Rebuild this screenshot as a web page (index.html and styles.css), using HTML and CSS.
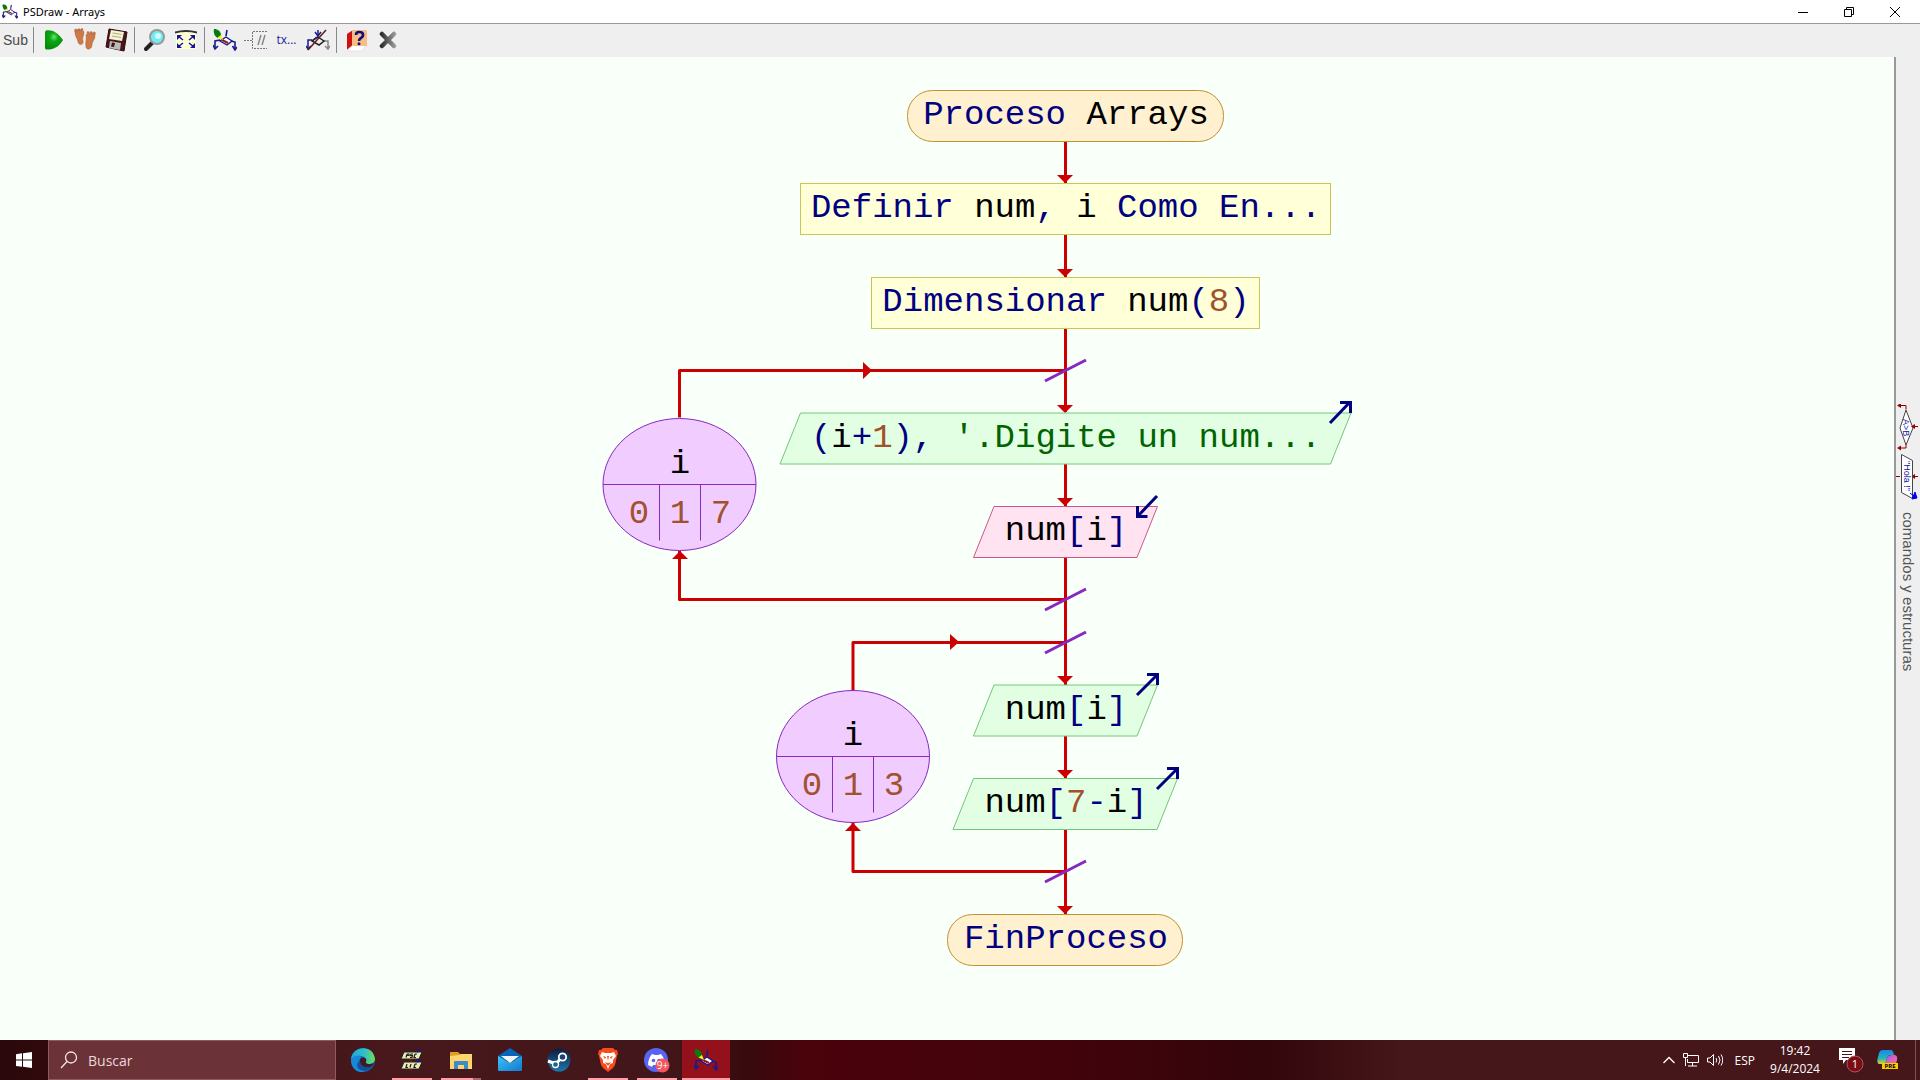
FILE: index.html
```html
<!DOCTYPE html>
<html lang="es">
<head>
<meta charset="utf-8">
<title>PSDraw - Arrays</title>
<link rel="stylesheet" href="styles.css">
</head>
<body>
<svg class="defs" aria-hidden="true">
  <defs>
    <symbol id="draw" viewBox="0 0 24 22">
      <path d="M13 8l6 4-5 4-7-4z" fill="#fff" stroke="#1a1a8c" stroke-width="1.4"/>
      <path d="M14 1l-1 6M7 11l-5 1v7M18 12l4 1v7" fill="none" stroke="#1a1a8c" stroke-width="1.6"/>
      <path d="M0 16l2 4 3-3M19.500 17l2.500 4 2-3" fill="none" stroke="#1a1a8c" stroke-width="1.6"/>
      <path d="M9 11l6 3" stroke="#901820" stroke-width="2"/>
      <path d="M1 0c4 0 7 2 7 7l-3 2C2 8 0 4 1 0z" fill="#087a10"/>
      <path d="M4.500 8.500L8 6l2 5z" fill="#f3f018"/>
    </symbol>
    <linearGradient id="edgeA" x1="0" y1="0" x2="1" y2="0"><stop offset="0" stop-color="#1ba5dc"/><stop offset=".6" stop-color="#35c1c4"/><stop offset="1" stop-color="#6be04f"/></linearGradient>
    <linearGradient id="mailA" x1="0" y1="0" x2="1" y2="1"><stop offset="0" stop-color="#39c4f5"/><stop offset="1" stop-color="#1378d0"/></linearGradient>
    <linearGradient id="steamA" x1="0" y1="0" x2="0" y2="1"><stop offset="0" stop-color="#101a3c"/><stop offset="1" stop-color="#1a78ae"/></linearGradient>
    <linearGradient id="cop" x1="0" y1="0" x2="1" y2="1"><stop offset="0" stop-color="#7a5cf0"/><stop offset=".5" stop-color="#d864c8"/><stop offset="1" stop-color="#f8785c"/></linearGradient>
    <linearGradient id="cop2" x1="0" y1="0" x2="0" y2="1"><stop offset="0" stop-color="#1c86f0"/><stop offset=".6" stop-color="#22b9b4"/><stop offset="1" stop-color="#e0d030"/></linearGradient>
    <linearGradient id="xg" gradientUnits="userSpaceOnUse" x1="1" y1="0" x2="18" y2="0"><stop offset="0" stop-color="#222"/><stop offset="1" stop-color="#aaa"/></linearGradient>
    <radialGradient id="playg" cx=".5" cy=".35" r=".6"><stop offset="0" stop-color="#70e070"/><stop offset=".4" stop-color="#08a810"/><stop offset="1" stop-color="#078a0c"/></radialGradient>
  </defs>
</svg>

<header class="titlebar">
  <svg class="app-icon" viewBox="0 0 24 22"><use href="#draw"/></svg>
  <h1 class="title">PSDraw - Arrays</h1>
  <div class="window-buttons">
    <button aria-label="Minimizar"><svg viewBox="0 0 12 12"><path d="M1 6.500h10" stroke="#000"/></svg></button>
    <button aria-label="Restaurar"><svg viewBox="0 0 12 12"><path d="M1.500 3.500h7v7h-7zM3.500 3.500v-2h7v7h-2" fill="none" stroke="#000"/></svg></button>
    <button aria-label="Cerrar"><svg viewBox="0 0 12 12"><path d="M1 1l10 10M11 1L1 11" stroke="#000"/></svg></button>
  </div>
</header>

<nav class="toolbar" aria-label="Herramientas">
  <button class="sub">Sub</button>
  <span class="sep"></span>
  <button aria-label="Ejecutar"><svg width="20" height="20" viewBox="0 0 20 20"><path d="M2 .500c6-1 12 2 17 9.500-4 7-10 10-17 9.500Q.500 19 1 16V3Q1 1 2 .500z" fill="url(#playg)"/></svg></button>
  <button aria-label="Paso a paso"><svg width="22" height="24" viewBox="0 0 22 24"><g fill="#cc7a48" stroke="#a65b30" stroke-width=".5"><path d="M1 4c1-3 8-3 9 0 0 4-2 5-1 9s-4 5-5 1C4 11 1 9 1 4z"/><path d="M12 7c1-3 9-2 9 1 0 4-3 5-3 9s-5 6-6 2 1-8 0-12z"/><circle cx="2" cy="2.500" r="1.500"/><circle cx="5" cy="1.700" r="1"/><circle cx="8" cy="1.500" r="1"/><circle cx="14" cy="4.500" r="1"/><circle cx="17" cy="4.500" r="1"/><circle cx="20" cy="5.500" r="1.500"/></g></svg></button>
  <button aria-label="Guardar"><svg width="24" height="24" viewBox="0 0 24 24"><path d="M5 1l18 3-3 19-18-4z" fill="#4a1519" stroke="#2b090c"/><path d="M7 2l13 2-2 9-13-2z" fill="#f6f4d4"/><path d="M8.500 5l9 1.500M8 8l9 1.500" stroke="#b0ad84"/><path d="M6 13l11 2-1 7-11-2z" fill="#bababa"/><path d="M8 14.500l3 .500-1 4-3-.500z" fill="#3b1418"/></svg></button>
  <span class="sep"></span>
  <button aria-label="Zoom"><svg width="22" height="24" viewBox="0 0 22 24"><path d="M2 21l6-6" stroke="#222" stroke-width="4" stroke-linecap="round"/><circle cx="13" cy="9" r="7" fill="#70ecf4" stroke="#999" stroke-width="2"/><circle cx="14" cy="8" r="3" fill="#cffcff"/></svg></button>
  <button aria-label="Ajustar"><svg width="22" height="20" viewBox="0 0 22 20"><path d="M1 1h20v18H1z" fill="#ffffd4"/><path d="M0 2.500q11-3 22 0" stroke="#333" stroke-width="2" fill="none"/><path d="M2 5h5L2 10zM20 5h-5l5 5zM2 18h5l-5-5zM20 18h-5l5-5z" fill="#1414a0"/><path d="M3 6l5 4M19 6l-5 4M3 17l5-4M19 17l-5-4" stroke="#1414a0" stroke-width="1.500"/></svg></button>
  <span class="sep"></span>
  <button aria-label="Editar"><svg width="24" height="22" viewBox="0 0 24 22"><use href="#draw"/></svg></button>
  <button aria-label="Comentarios"><svg width="24" height="20" viewBox="0 0 24 20"><path d="M0 10.500h8M23 1.500H8.500v17H23" fill="none" stroke="#777" stroke-dasharray="2 1"/><path d="M17 5l-3 10M21 5l-3 10" stroke="#888" stroke-width="1.500"/></svg></button>
  <button class="tx">tx...</button>
  <button aria-label="Estilo"><svg width="24" height="22" viewBox="0 0 24 22"><path d="M12 1v6M11 8l-5 4M6 11H2v8" fill="none" stroke="#1a1a8c" stroke-width="1.500"/><path d="M0 17l2 3 3-3M9 3l3 4 3-4" fill="none" stroke="#1a1a8c" stroke-width="1.500"/><path d="M18 12h4v7M19 17l3 3 2-3" fill="none" stroke="#888" stroke-width="1.500"/><path d="M12 8l6 4-5 4-7-4z" fill="none" stroke="#222" stroke-width="1.500"/><path d="M2 21L20 1" stroke="#641820" stroke-width="1.500"/></svg></button>
  <span class="sep"></span>
  <button aria-label="Ayuda"><svg width="22" height="24" viewBox="0 0 22 24"><path d="M1 6l6-4v15l-4 5-2-1z" fill="#cf1010"/><path d="M2 21l5-4h13l-4 6H3z" fill="#fff" stroke="#ccc" stroke-width=".5"/><path d="M6 2h14q1 0 1 2v14H6z" fill="#f8bd84"/><path d="M10 7q0-3 3-3c5 0 5 4 2 6q-2 1-2 3" fill="none" stroke="#10107c" stroke-width="2.600"/><circle cx="13" cy="15.800" r="1.500" fill="#10107c"/></svg></button>
  <button aria-label="Cerrar diagrama"><svg width="18" height="18" viewBox="0 0 18 18"><path d="M3 3l12 12M15 3L3 15" stroke="url(#xg)" stroke-width="4.500" stroke-linecap="round"/></svg></button>
</nav>

<div class="workspace">
  <main class="canvas">
    <svg class="flowchart" viewBox="522 57 850 943" role="img" aria-label="Diagrama de flujo Arrays">
      <g class="wire">
        <path d="M1065.500 141v42M1065.500 234v43M1065.500 328v84M1065.500 464v42M1065.500 557v128M1065.500 736v42M1065.500 829v85"/>
        <path d="M1065 370.500H679.500v47M1065 599.500H679.500v-50"/>
        <path d="M1065 642.500H853v48M1065 871.500H853v-50"/>
      </g>
      <g class="heads">
        <path d="M1057 175h16l-8 8zM1057 269h16l-8 8zM1057 405h16l-8 8zM1057 498h16l-8 8zM1057 676h16l-8 8zM1057 770h16l-8 8zM1057 906h16l-8 8z"/>
        <path d="M863 362v17l9-8.500zM950 634v16l9-8z"/>
        <path d="M672 559h16l-8-8zM845 831h16l-8-8z"/>
      </g>
      <path class="junction" d="M1045 381l41-21M1045 610l41-21M1045 653l41-21M1045 882l41-21"/>

      <rect class="terminal" x="907.500" y="90.500" width="316" height="51" rx="25"/>
      <rect class="action" x="800.500" y="183.500" width="530" height="51"/>
      <rect class="action" x="871.500" y="277.500" width="388" height="51"/>
      <path class="output" d="M800.500 413H1351l-20.500 51H780z"/>
      <path class="input" d="M994 506.500h163.500l-20.500 51H973.500z"/>
      <path class="output" d="M994 685h163.500l-20.500 51H973.500z"/>
      <path class="output" d="M973.500 778.500h204l-20.500 51H953z"/>
      <rect class="terminal" x="947.500" y="914.500" width="235" height="51" rx="25"/>

      <g class="loop">
        <ellipse cx="679.500" cy="484.500" rx="76.500" ry="66"/>
        <path d="M603 484.500h153M659.500 484.500v56M700.500 484.500v56"/>
        <ellipse cx="853" cy="756.500" rx="76.500" ry="66"/>
        <path d="M776.500 756.500h153M832.500 756.500v56M873.500 756.500v56"/>
      </g>

      <path class="io-arrow" d="M1330 423l20-21M1340 402.500h10.500V413"/>
      <path class="io-arrow" d="M1157 496l-20 21M1137.500 506v10.500h10"/>
      <path class="io-arrow" d="M1137 695l20-20M1147 674.500h10.500V685"/>
      <path class="io-arrow" d="M1157 789l20-20M1167 768.500h10.500V779"/>

      <g class="code">
        <text x="1066" y="124">Proceso <tspan class="id">Arrays</tspan></text>
        <text x="1066" y="217">Definir <tspan class="id">num</tspan>, <tspan class="id">i</tspan> Como En...</text>
        <text x="1066" y="311">Dimensionar <tspan class="id">num</tspan>(<tspan class="num">8</tspan>)</text>
        <text x="1066" y="447">(<tspan class="id">i</tspan>+<tspan class="num">1</tspan>), <tspan class="str">'.Digite un num...</tspan></text>
        <text x="1066" y="540"><tspan class="id">num</tspan>[<tspan class="id">i</tspan>]</text>
        <text x="1066" y="719"><tspan class="id">num</tspan>[<tspan class="id">i</tspan>]</text>
        <text x="1066" y="812"><tspan class="id">num</tspan>[<tspan class="num">7</tspan>-<tspan class="id">i</tspan>]</text>
        <text x="1066" y="948">FinProceso</text>
        <text class="id" x="680" y="473">i</text>
        <text class="num" x="639" y="523">0</text>
        <text class="num" x="680" y="523">1</text>
        <text class="num" x="721" y="523">7</text>
        <text class="id" x="853" y="745">i</text>
        <text class="num" x="812" y="795">0</text>
        <text class="num" x="853" y="795">1</text>
        <text class="num" x="894" y="795">3</text>
      </g>
    </svg>
  </main>
  <aside class="side-panel">
    <svg width="24" height="98" viewBox="0 0 24 98">
      <path d="M10 6l7 18-7 17L4 24z" fill="#fff" stroke="#444"/>
      <path d="M10 5.500V1.500H3M10 41v3H3M16 22.500h6M0 72.500h4M16 72.500h6" fill="none" stroke="#800" stroke-width="1"/>
      <path d="M1 1.500L5-1v5zM1 44l4-2.500v5zM15 22.500l4-2.500v5zM15 72.500l4-2.500v5z" fill="#900"/>
      <path d="M5.500 50.500l11 6v38l-11-6z" fill="#fff" stroke="#444"/>
      <path d="M21 94l-2-6-3 7zM14 89l5 4" fill="#00f" stroke="#00f"/>
      <g class="mini"><text transform="translate(7 15) rotate(90)">A&gt;B</text><text transform="translate(8 57) rotate(90)">"Hola !"</text></g>
    </svg>
    <span class="side-label">comandos y estructuras</span>
  </aside>
</div>

<footer class="taskbar">
  <button class="start" aria-label="Inicio"><svg width="16" height="16" viewBox="0 0 16 16"><path d="M0 2.200L6 1.300V7.500H0zM7 1.200L16 0v7.500H7zM0 8.500h6v6.200L0 14zM7 8.500h9V16l-9-1.200z" fill="#fff"/></svg></button>
  <label class="search">
    <svg width="18" height="18" viewBox="0 0 18 18"><circle cx="11" cy="6.500" r="5.500" fill="none" stroke="#f4e4e4" stroke-width="1.300"/><path d="M7 10.500L1 17" stroke="#f4e4e4" stroke-width="1.300"/></svg>
    <input type="text" placeholder="Buscar" aria-label="Buscar">
  </label>
  <div class="apps">
    <button aria-label="Edge"><svg width="24" height="24" viewBox="0 0 24 24"><circle cx="12" cy="12" r="12" fill="#0c63b8"/><path d="M0 12C0-2 22-5 24 11c0 5-7 6-9 4-1-1 1-2 0-4C13 7 4 6 0 12z" fill="url(#edgeA)"/><path d="M0 12c3-5 8-5 11-3-6 3-3 13 3 14.500C6 26 0 20 0 12z" fill="#1688d6"/><path d="M9 12c1-3 4-3 6-1 1 2-1 3 0 4 2 2 6 1 8 0-1 2-2 3-3 4-6 2-12-2-11-7z" fill="#45181b"/><path d="M9 13c0 5 6 8 12 5-3 5-9 6-13 3-3-3-2-7 1-8z" fill="#10509c"/></svg></button>
    <button class="open" aria-label="PSeInt"><svg width="24" height="22" viewBox="0 0 24 22"><path d="M4 3h18l-3 7H1zM4 13h18l-3 7H1z" fill="#e8ecb4" stroke="#222"/><path d="M7 5L6 8.500M7 5h2v1.500H7M13 5h-2l-.500 1.700h2L12 8.500h-2M15 5l-1 3.500h2M15 5h2M7 15l-1 3.500h2M11 15l-1 3.500M15 15l-1 3.500h2M15 15h2" stroke="#222" stroke-width="1.200" fill="none"/><path d="M17 3l3-2M17 13l3-2" stroke="#11b" stroke-width="2"/><path d="M11 10v3M11 20v2" stroke="#c00"/></svg></button>
    <button class="open multi" aria-label="Explorador"><svg width="22" height="19" viewBox="0 0 22 19"><path d="M0 1h8l2 2h11v5H0z" fill="#e0a020"/><path d="M0 5l9-1 2-1h11v15H0z" fill="#fdd670"/><path d="M4 18v-7q0-1 1-1h12q1 0 1 1v7h-4v-4H8v4z" fill="#3c8cc8"/></svg></button>
    <button aria-label="Correo"><svg width="24" height="24" viewBox="0 0 24 24"><path d="M0 8l12-8 12 8v4H0z" fill="#0864b8"/><path d="M0 8l12 7 12-7v14q0 1-1 1H1q-1 0-1-1z" fill="url(#mailA)"/><path d="M3 8h18l-9 7z" fill="#f0f4f8"/></svg></button>
    <button aria-label="Steam"><svg width="24" height="24" viewBox="0 0 24 24"><circle cx="12" cy="12" r="11.500" fill="url(#steamA)"/><path d="M1 13l8 3 5-6" fill="none" stroke="#fff" stroke-width="3"/><circle cx="8.500" cy="16.500" r="3" fill="#24608c" stroke="#fff" stroke-width="1.300"/><circle cx="15.500" cy="9" r="3.700" fill="#24406c" stroke="#fff" stroke-width="1.800"/></svg></button>
    <button class="open" aria-label="Brave"><svg width="20" height="24" viewBox="0 0 20 24"><path d="M5 0h10l2 2h2l1 4-1 2-2 9-2 3-5 4-5-4-2-3L1 8 0 6l1-4h2z" fill="#fb4a1c"/><path d="M4 4l3 1h6l3-1 2 4-3 4v3l-3 1-2 5-2-5-3-1v-3L2 8z" fill="#fff"/><path d="M5 8l3 1-1 2zM15 8l-3 1 1 2zM9 8h2l-1 5zM7 14l3 1 3-1-3 4z" fill="#fb4a1c"/></svg></button>
    <button class="open" aria-label="Discord"><svg width="26" height="26" viewBox="0 0 26 26"><circle cx="12" cy="13" r="12" fill="#5865f2"/><path d="M8 7l3 1h3l3-1q4 5 4 11l-5 2-1-2H9l-1 2-4-2q0-6 4-11z" fill="#fff"/><circle cx="9.500" cy="13.500" r="1.800" fill="#5865f2"/><circle cx="15" cy="13.500" r="1.800" fill="#5865f2"/><circle cx="18.500" cy="18.500" r="7" fill="#f0565c"/><text class="badge-text" x="18.500" y="22">9+</text></svg></button>
    <button class="open active" aria-label="PSDraw"><svg width="24" height="22" viewBox="0 0 24 22"><use href="#draw"/></svg></button>
  </div>
  <div class="tray">
    <svg width="12" height="8" viewBox="0 0 12 8"><path d="M.500 7L6 1.500 11.500 7" fill="none" stroke="#fff" stroke-width="1.300"/></svg>
    <svg width="16" height="14" viewBox="0 0 16 14"><path d="M5 2.500h10.500v7H4.500V6M9.500 10v3M5 13h9M.500.500h4v4h-4zM2.500 5v8" fill="none" stroke="#fff"/></svg>
    <svg width="16" height="14" viewBox="0 0 16 14"><path d="M.500 5v4H3l3.500 3.500v-11L3 5zM9 5q1.500 2 0 4.500M11.500 3q3 4 0 8.500M14 1.500q3.500 5.500 0 11" fill="none" stroke="#fff"/></svg>
    <span class="lang">ESP</span>
    <time class="clock" datetime="2024-04-09T19:42">19:42<br>9/4/2024</time>
    <svg class="notice" width="26" height="26" viewBox="0 0 26 26"><path d="M0 1h16v12H7l-3 4v-4H0z" fill="#fff"/><path d="M3 4.500h10M3 7.500h10M3 10.500h7" stroke="#45181b"/><circle cx="16" cy="17" r="8" fill="#7c0c14" stroke="#a85a5e"/><text class="count" x="16" y="21">1</text></svg>
    <svg class="copilot" width="22" height="22" viewBox="0 0 22 22"><path d="M6 1h8q2 0 3 5h-4Q11 6 10 9l-2 6H3Q-1 15 1 8l1-4q1-3 4-3z" fill="url(#cop2)"/><path d="M15 6h2q4 0 3 5l-1 4q-1 3-4 3H7l3-9q1-3 5-3z" fill="url(#cop)"/><path d="M5 14h16v6H5z" fill="#fc0"/><text class="pre" x="13" y="19">PRE</text></svg>
  </div>
</footer>
</body>
</html>
```

FILE: styles.css
```css
* { box-sizing: border-box; }

body {
  margin: 0;
  min-height: 100vh;
  display: flex;
  flex-direction: column;
  background: #f9fff9;
  color: #000;
  font-family: "Open Sans", "Noto Sans", sans-serif;
  font-size: 12px;
}

button {
  display: flex;
  align-items: center;
  justify-content: center;
  padding: 0;
  border: 0;
  background: none;
  font: inherit;
  color: inherit;
}

svg { display: block; flex: none; }

.defs { position: absolute; width: 0; height: 0; }

/* Title bar */
.titlebar {
  display: flex;
  align-items: center;
  height: 24px;
  padding: 0 2px;
  background: #fff;
  border-bottom: 1px solid #999;
}
.app-icon { width: 16px; height: 15px; }
.title {
  flex: 1;
  margin: 0 0 0 5px;
  font-family: "Noto Sans", sans-serif;
  font-size: 11px;
  font-weight: 400;
}
.window-buttons { display: flex; }
.window-buttons button { width: 46px; height: 20px; }
.window-buttons svg { width: 12px; height: 12px; }

/* Toolbar */
.toolbar {
  display: flex;
  align-items: center;
  height: 33px;
  padding: 0 1px 2px;
  background: #efefef;
}
.toolbar button { width: 31px; height: 30px; }
.toolbar .sub {
  width: 29px;
  color: #4a4a4a;
  font-family: "Liberation Sans", sans-serif;
  font-size: 14px;
}
.toolbar .tx { color: #24249a; }
.sep {
  width: 1px;
  height: 26px;
  margin: 0 4px 0 3px;
  background: #888;
}

/* Drawing area */
.workspace { flex: 1; display: flex; }
.canvas {
  flex: 1;
  display: flex;
  align-items: flex-start;
  justify-content: center;
  overflow: hidden;
}
.flowchart { width: 850px; height: 943px; }
.wire { fill: none; stroke: #cc0000; stroke-width: 3; stroke-linejoin: round; }
.heads { fill: #cc0000; }
.junction { stroke: #8828c0; stroke-width: 3; }
.terminal { fill: #fff0cf; stroke: #c09030; }
.action { fill: #ffffd8; stroke: #c8c850; }
.output { fill: #e3ffe3; stroke: #70c878; }
.input { fill: #ffe3f1; stroke: #c8588c; }
.loop { fill: #f0ccff; stroke: #8828c0; }
.io-arrow { fill: none; stroke: #000080; stroke-width: 3; }
.code {
  fill: #000080;
  font-family: "Liberation Mono", monospace;
  font-size: 34px;
  text-anchor: middle;
}
.id { fill: #000; }
.num { fill: #a0522d; }
.str { fill: #006400; }

/* Command panel */
.side-panel {
  display: flex;
  flex-direction: column;
  align-items: center;
  width: 26px;
  padding-top: 347px;
  background: #efefef;
  border-left: 2px solid #999;
}
.side-label {
  margin-top: 10px;
  writing-mode: vertical-rl;
  color: #555;
  font-family: "Liberation Sans", sans-serif;
  font-size: 15px;
  line-height: 24px;
}
.mini {
  fill: #1414a0;
  font-family: "Liberation Sans", sans-serif;
  font-size: 9px;
}

/* Taskbar */
.taskbar {
  display: flex;
  height: 40px;
  color: #fff;
  background: linear-gradient(90deg, #2a080b 0, #32090d 3%, #48181c 20%, #41161a 35%, #380a0e 39%, #4a020b 42%, #43030b 55%, #32060b 66%, #45161a 73%, #45161a 100%);
}
.start { width: 48px; }
.search {
  display: flex;
  align-items: center;
  gap: 10px;
  width: 288px;
  padding-left: 11px;
  background: #6b3238;
  border: 1px solid #8d5a60;
}
.search input {
  flex: 1;
  min-width: 0;
  padding: 0;
  border: 0;
  background: none;
  font: 14px "Open Sans", sans-serif;
}
.search input::placeholder { color: #ead8da; opacity: 1; }
.apps { display: flex; gap: 1px; margin-left: 3px; }
.apps button { position: relative; width: 48px; }
.apps .open::after {
  content: "";
  position: absolute;
  inset: auto 4px 0;
  height: 2px;
  background: #ffa0a8;
}
.apps .multi::after { background: linear-gradient(90deg, #ffa0a8 80%, #a8686e 80%); }
.apps .active { background: #94101a; }
.apps .active::after { inset: auto 0 0; }
.badge-text { fill: #fff; font-size: 10px; text-anchor: middle; }
.tray {
  display: flex;
  align-items: center;
  margin-left: auto;
  padding-right: 16px;
  margin-right: 4px;
  border-right: 1px solid #7a5054;
  gap: 8px;
}
.tray .lang { margin-left: 4px; }
.clock {
  width: 64px;
  line-height: 18px;
  text-align: center;
}
.notice { margin-left: 4px; }
.copilot { margin-left: 4px; }
.count { fill: #fff; font-size: 11px; text-anchor: middle; }
.pre { font-size: 6px; font-weight: 700; text-anchor: middle; }
```
